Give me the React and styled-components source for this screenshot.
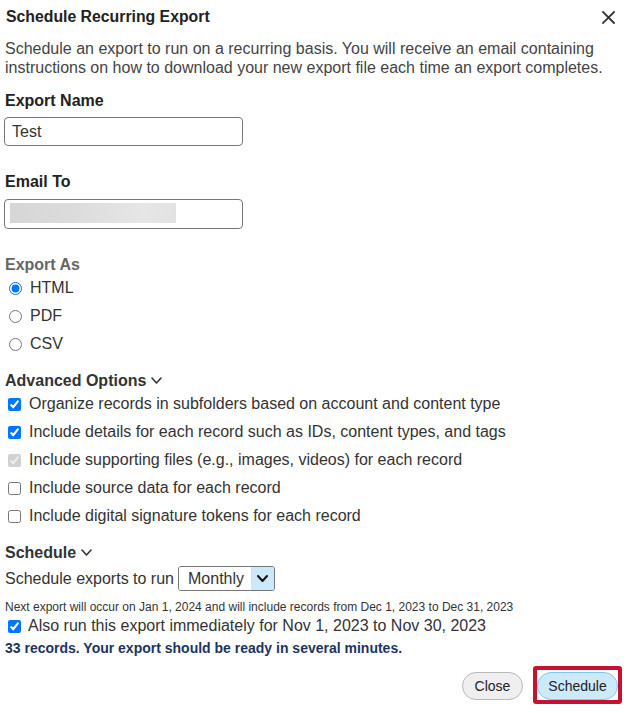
import React from "react";
import styled, { createGlobalStyle } from "styled-components";

const GlobalStyle = createGlobalStyle`
  html, body { margin: 0; padding: 0; background: #fff; }
  body { font-family: "Liberation Sans", Arial, sans-serif; color: #333; }
  * { box-sizing: border-box; }
`;

const Dialog = styled.div`
  width: 627px;
  height: 713px;
  padding: 0 5px;
  display: flex;
  flex-direction: column;
  background: #fff;
`;

const Header = styled.div`
  height: 34px;
  display: flex;
  align-items: center;
  justify-content: space-between;
`;

const Title = styled.h1`
  margin: 0 0 0 1px;
  font-size: 15.8px;
  line-height: 20px;
  font-weight: bold;
  color: #222;
`;

const CloseIcon = styled.button`
  width: 13px;
  height: 13px;
  margin-right: 7px;
  padding: 0;
  border: 0;
  background: none;
  display: flex;
  cursor: pointer;
`;

const Description = styled.p`
  margin: 5px 0 0;
  font-size: 16px;
  line-height: 19px;
  color: #444;
`;

const FieldLabel = styled.label`
  display: block;
  margin-top: ${(p) => p.$mt}px;
  font-size: 16px;
  line-height: 19px;
  font-weight: bold;
  color: ${(p) => (p.$muted ? "#666" : "#222")};
`;

const TextInput = styled.input`
  display: block;
  margin: 7px 0 0 -1px;
  width: 239px;
  height: 29px;
  padding: 0 7px;
  border: 1px solid #767676;
  border-radius: 4px;
  font-family: inherit;
  font-size: 16px;
  color: #333;
  background: #fff;
  outline: none;
`;

const RedactedInput = styled(TextInput)`
  margin-top: 8px;
  height: 30px;
  background: linear-gradient(to right, #d6d6d6, #dcdcdc 40%, #e6e6e6 80%, #e2e2e2) no-repeat 5px 3px / 166px 20px, #fff;
`;

const OptionRow = styled.label`
  display: flex;
  align-items: center;
  height: ${(p) => p.$h || 28}px;
  font-size: 16px;
  color: #333;
`;

const Radio = styled.input.attrs({ type: "radio" })`
  width: 13px;
  height: 13px;
  margin: 0 8px 0 4px;
`;

const Check = styled.input.attrs({ type: "checkbox" })`
  width: 13px;
  height: 13px;
  margin: 0 ${(p) => p.$gap || 8}px 0 3px;
`;

const Toggle = styled.div`
  margin-top: ${(p) => p.$mt || 13}px;
  display: flex;
  align-items: center;
  gap: 5px;
  font-size: 16px;
  line-height: 19px;
  font-weight: bold;
  color: #333;
`;

const RunRow = styled.div`
  margin-top: 2px;
  height: 29px;
  display: flex;
  align-items: center;
  gap: 4px;
  font-size: 16px;
  color: #333;
`;

const SelectBox = styled.div`
  display: flex;
  width: 97px;
  height: 25px;
  border: 1px solid #767676;
  border-radius: 3px;
  overflow: hidden;
`;

const Select = styled.select`
  appearance: none;
  flex: 1;
  border: 0;
  padding: 0 0 0 9px;
  background: #fff;
  font-family: inherit;
  font-size: 16px;
  color: #333;
  outline: none;
`;

const SelectArrow = styled.span`
  width: 23px;
  display: flex;
  align-items: center;
  justify-content: center;
  background: #cce8ff;
`;

const Note = styled.div`
  margin-top: 7px;
  font-size: 12px;
  line-height: 14px;
  color: #333;
`;

const Status = styled.div`
  margin-top: 2px;
  font-size: 14px;
  line-height: 16px;
  font-weight: bold;
  color: #1c355e;
`;

const Footer = styled.div`
  margin-top: 10px;
  display: flex;
  justify-content: flex-end;
  align-items: flex-end;
  gap: 10px;
`;

const Button = styled.button`
  width: ${(p) => p.$w}px;
  height: 28px;
  margin-bottom: ${(p) => p.$mb || 0}px;
  padding: 0;
  border-radius: 14px;
  border: 1px solid ${(p) => (p.$primary ? "#82c6f2" : "#b8b8b8")};
  background: ${(p) => (p.$primary ? "#cde9fc" : "#efefef")};
  font-family: inherit;
  font-size: 14px;
  color: #222;
  cursor: pointer;
`;

const FocusRing = styled.span`
  display: inline-flex;
  padding-top: 2px;
  border: 4px solid #c4122f;
  border-radius: 3px;
`;

const Chevron = ({ w = 11, h = 6, sw = 1.6, color = "#333" }) => (
  <svg width={w} height={h + 2} viewBox={`0 0 ${w} ${h + 2}`}>
    <polyline
      points={`1,1 ${w / 2},${h} ${w - 1},1`}
      fill="none"
      stroke={color}
      strokeWidth={sw}
      strokeLinecap="round"
      strokeLinejoin="round"
    />
  </svg>
);

const options = [
  { label: "Organize records in subfolders based on account and content type", checked: true },
  { label: "Include details for each record such as IDs, content types, and tags", checked: true },
  { label: "Include supporting files (e.g., images, videos) for each record", checked: true, disabled: true },
  { label: "Include source data for each record", checked: false },
  { label: "Include digital signature tokens for each record", checked: false },
];

export default function App() {
  return (
    <>
      <GlobalStyle />
      <Dialog>
        <Header>
          <Title>Schedule Recurring Export</Title>
          <CloseIcon aria-label="Close">
            <svg width="13" height="13" viewBox="0 0 13 13">
              <path d="M1 1L12 12M12 1L1 12" stroke="#333" strokeWidth="1.8" strokeLinecap="square" />
            </svg>
          </CloseIcon>
        </Header>
        <Description>
          Schedule an export to run on a recurring basis. You will receive an email containing
          instructions on how to download your new export file each time an export completes.
        </Description>

        <FieldLabel $mt={14}>Export Name</FieldLabel>
        <TextInput defaultValue="Test" />

        <FieldLabel $mt={26}>Email To</FieldLabel>
        <RedactedInput defaultValue="" />

        <FieldLabel $mt={26} $muted>Export As</FieldLabel>
        {["HTML", "PDF", "CSV"].map((f) => (
          <OptionRow key={f}>
            <Radio name="fmt" defaultChecked={f === "HTML"} />
            {f}
          </OptionRow>
        ))}

        <Toggle>
          Advanced Options <Chevron />
        </Toggle>
        {options.map((o) => (
          <OptionRow key={o.label}>
            <Check defaultChecked={o.checked} disabled={o.disabled} />
            {o.label}
          </OptionRow>
        ))}

        <Toggle>
          Schedule <Chevron />
        </Toggle>
        <RunRow>
          Schedule exports to run
          <SelectBox>
            <Select defaultValue="Monthly">
              <option>Daily</option>
              <option>Weekly</option>
              <option>Monthly</option>
            </Select>
            <SelectArrow>
              <Chevron w={11} h={6} sw={2} color="#111" />
            </SelectArrow>
          </SelectBox>
        </RunRow>
        <Note>
          Next export will occur on Jan 1, 2024 and will include records from Dec 1, 2023 to Dec 31, 2023
        </Note>
        <OptionRow $h={24}>
          <Check defaultChecked $gap={7} />
          Also run this export immediately for Nov 1, 2023 to Nov 30, 2023
        </OptionRow>
        <Status>33 records. Your export should be ready in several minutes.</Status>

        <Footer>
          <Button $w={61} $mb={4}>Close</Button>
          <FocusRing>
            <Button $w={81} $primary>Schedule</Button>
          </FocusRing>
        </Footer>
      </Dialog>
    </>
  );
}
